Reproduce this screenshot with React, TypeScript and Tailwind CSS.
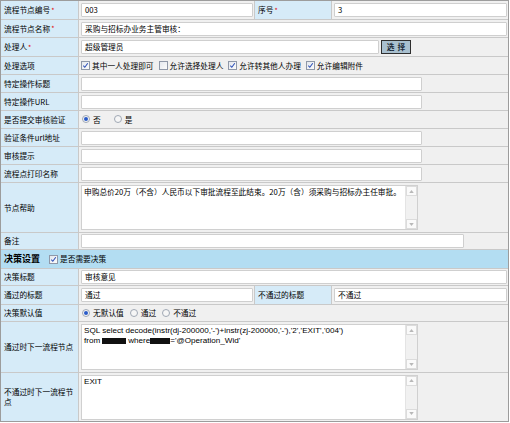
import React from "react";

const Req = () => <span className="text-[#e00000] align-top text-[7px] leading-none ml-px">*</span>;

function Check({ checked }: { checked?: boolean }) {
  return (
    <span className="inline-flex items-center justify-center w-[9px] h-[9px] border border-[#8f98a8] bg-gradient-to-br from-[#e4e8ee] to-[#fbfbfb] mr-[2px] shrink-0">
      {checked && (
        <svg viewBox="0 0 8 8" className="w-[7px] h-[7px]">
          <path d="M1.5 4.2 L3.2 6 L6.6 1.4" fill="none" stroke="#2b4fb8" strokeWidth="1.2" />
        </svg>
      )}
    </span>
  );
}

function Radio({ checked }: { checked?: boolean }) {
  return (
    <span className="inline-flex items-center justify-center w-[8px] h-[8px] rounded-full border border-[#a0a8b4] bg-[#f6f6f6] mr-[3px] shrink-0">
      {checked && <span className="w-[4px] h-[4px] rounded-full bg-[#2a5bc8]" />}
    </span>
  );
}

function Input({ w, value }: { w: string; value?: string }) {
  return (
    <div className={`${w} h-[14px] bg-white border border-[#cfcfcf] rounded-[1px] flex items-center px-[3px] text-black`}>
      {value}
    </div>
  );
}

function Area({ children, h, sql }: { children?: React.ReactNode; h: string; sql?: boolean }) {
  return (
    <div className={`w-[337px] ${h} bg-white border border-[#d0d0d0] flex`}>
      <div className={`flex-1 px-[2px] pt-px leading-[10px] text-black ${sql ? "font-['Liberation_Sans',sans-serif] text-[8.1px]" : ""}`}>
        {children}
      </div>
      <div className="w-[12px] bg-[#f1f1f1] border-l border-[#e4e4e4] flex flex-col justify-between">
        <div className="h-[10px] border border-[#dcdcdc] bg-[#fafafa] flex items-center justify-center">
          <svg viewBox="0 0 6 4" className="w-[5px] h-[3px]"><path d="M0 4 L3 0 L6 4Z" fill="#b8b8b8" /></svg>
        </div>
        <div className="h-[10px] border border-[#dcdcdc] bg-[#fafafa] flex items-center justify-center">
          <svg viewBox="0 0 6 4" className="w-[5px] h-[3px]"><path d="M0 0 L3 4 L6 0Z" fill="#b8b8b8" /></svg>
        </div>
      </div>
    </div>
  );
}

function Row({ label, h, children }: { label: React.ReactNode; h: string; children?: React.ReactNode }) {
  return (
    <div className={`flex gap-px ${h}`}>
      <div className="w-[77px] bg-[#d6ebf8] flex items-center pl-[3px] text-black leading-[10px]">{label}</div>
      <div className="flex-1 bg-[#f0f0f0] flex items-center pl-[2px] gap-[2px]">{children}</div>
    </div>
  );
}

export default function App() {
  return (
    <div className="w-[510px] h-[423px] bg-white font-['Noto_Sans_CJK_SC',sans-serif] text-[7.7px] text-black">
      <div className="w-[509px] border border-[#9c9c9c] bg-[#c9c9c9] flex flex-col gap-px">
        <div className="flex gap-px h-[18px]">
          <div className="w-[77px] bg-[#d6ebf8] flex items-center pl-[3px]">流程节点编号<Req /></div>
          <div className="w-[175px] bg-[#f0f0f0] flex items-center pl-[2px]"><Input w="w-[172px]" value="003" /></div>
          <div className="w-[76px] bg-[#d6ebf8] flex items-center pl-[3px]">序号<Req /></div>
          <div className="flex-1 bg-[#f0f0f0] flex items-center pl-[2px]"><Input w="w-[173px]" value="3" /></div>
        </div>
        <Row h="h-[17px]" label={<>流程节点名称<Req /></>}>
          <Input w="w-[426px]" value="采购与招标办业务主管审核：" />
        </Row>
        <Row h="h-[18px]" label={<>处理人<Req /></>}>
          <Input w="w-[298px]" value="超级管理员" />
          <div className="w-[30px] h-[14px] bg-[#a9c0cf] border border-[#2e2e2e] flex items-center justify-center font-bold text-[#1b2a38] tracking-[3px] pl-[3px]">选择</div>
        </Row>
        <Row h="h-[17px]" label="处理选项">
          <span className="flex items-center mr-[3px]"><Check checked />其中一人处理即可</span>
          <span className="flex items-center mr-[3px]"><Check />允许选择处理人</span>
          <span className="flex items-center mr-[3px]"><Check checked />允许转其他人办理</span>
          <span className="flex items-center"><Check checked />允许编辑附件</span>
        </Row>
        <Row h="h-[17px]" label="特定操作标题"><Input w="w-[341px]" /></Row>
        <Row h="h-[17px]" label="特定操作URL"><Input w="w-[341px]" /></Row>
        <Row h="h-[17px]" label="是否提交审核验证">
          <span className="flex items-center ml-[1px] mr-[11px]"><Radio checked />否</span>
          <span className="flex items-center"><Radio />是</span>
        </Row>
        <Row h="h-[17px]" label="验证条件url地址"><Input w="w-[341px]" /></Row>
        <Row h="h-[17px]" label="审核提示"><Input w="w-[341px]" /></Row>
        <Row h="h-[17px]" label="流程点打印名称"><Input w="w-[341px]" /></Row>
        <Row h="h-[49px]" label="节点帮助">
          <Area h="h-[45px]">申购总价20万（不含）人民币以下审批流程至此结束。20万（含）须采购与招标办主任审批。</Area>
        </Row>
        <Row h="h-[16px]" label="备注"><Input w="w-[383px]" /></Row>
        <div className="h-[18px] bg-[#b3ddf2] flex items-center pl-[3px]">
          <span className="font-bold text-[9px] mr-[9px]">决策设置</span>
          <Check checked />是否需要决策
        </div>
        <Row h="h-[16px]" label="决策标题"><Input w="w-[426px]" value="审核意见" /></Row>
        <div className="flex gap-px h-[18px]">
          <div className="w-[77px] bg-[#d6ebf8] flex items-center pl-[3px]">通过的标题</div>
          <div className="w-[175px] bg-[#f0f0f0] flex items-center pl-[2px]"><Input w="w-[172px]" value="通过" /></div>
          <div className="w-[76px] bg-[#d6ebf8] flex items-center pl-[3px]">不通过的标题</div>
          <div className="flex-1 bg-[#f0f0f0] flex items-center pl-[2px]"><Input w="w-[173px]" value="不通过" /></div>
        </div>
        <Row h="h-[16px]" label="决策默认值">
          <span className="flex items-center ml-[1px] mr-[4px]"><Radio checked />无默认值</span>
          <span className="flex items-center mr-[4px]"><Radio />通过</span>
          <span className="flex items-center"><Radio />不通过</span>
        </Row>
        <Row h="h-[50px]" label="通过时下一流程节点">
          <Area h="h-[46px]" sql>
            <div>SQL select decode(instr(dj-200000,'-')+instr(zj-200000,'-'),'2','EXIT','004')</div>
            <div className="flex items-center">from <span className="inline-block w-[24px] h-[6px] bg-[#111] mx-[2px]" />where<span className="inline-block w-[20px] h-[6px] bg-[#111]" />='@Operation_Wid'</div>
          </Area>
        </Row>
        <Row h="h-[48px]" label={<span>不通过时下一流程节<br />点</span>}>
          <Area h="h-[45px]" sql>EXIT</Area>
        </Row>
      </div>
    </div>
  );
}
